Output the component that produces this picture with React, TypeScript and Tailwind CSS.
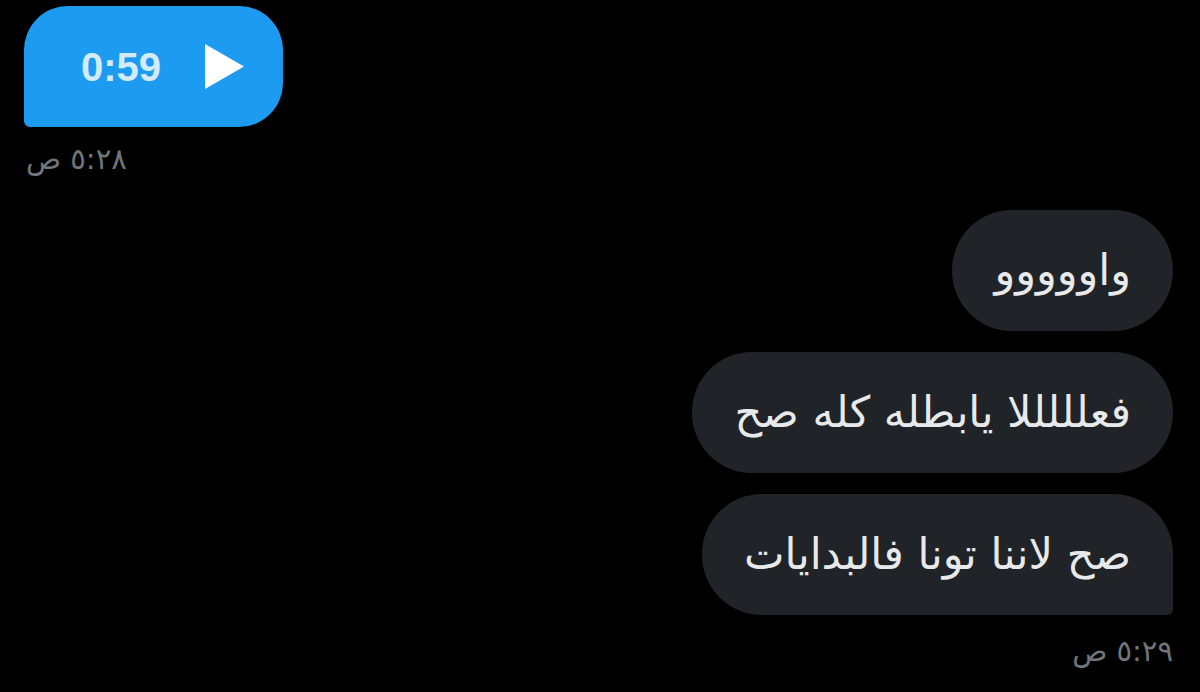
const arabic = { fontFamily: '"DejaVu Sans", "Noto Sans", sans-serif' };

const PlayIcon = () => (
  <svg width="40" height="46" viewBox="0 0 40 46">
    <path d="M0 0 L39 22.5 L0 45 Z" fill="#ffffff" />
  </svg>
);

const GrayBubble = ({ text, last }: { text: string; last?: boolean }) => (
  <div
    dir="rtl"
    className={
      'h-[121px] flex items-center px-[42px] bg-[#202327] text-[#e7e9ea] text-[43px] whitespace-nowrap ' +
      (last ? 'rounded-[60px] rounded-br-[6px]' : 'rounded-[60px]')
    }
    style={arabic}
  >
    {text}
  </div>
);

const App = () => {
  const messages = ['واووووو', 'فعلللللا يابطله كله صح', 'صح لاننا تونا فالبدايات'];

  return (
    <main className="w-[1200px] h-[692px] bg-black overflow-hidden">
      <div className="flex flex-col pt-[6px] pl-6 pr-[27px]">
        {/* voice message */}
        <div className="flex flex-col items-start">
          <div className="w-[259px] h-[121px] bg-[#1d9bf0] rounded-[44px] rounded-bl-[6px] flex items-center pl-[57px]">
            <span
              className="text-[40px] font-bold text-[#d4ebfc] leading-none"
              style={{ fontFamily: '"Liberation Sans", Arial, sans-serif' }}
            >
              0:59
            </span>
            <span className="ml-[44px] flex items-center">
              <PlayIcon />
            </span>
          </div>
          <div dir="rtl" className="mt-[14px] ml-[2px] text-[29px] text-[#71767b] leading-[36px]" style={arabic}>
            ٥:٢٨ ص
          </div>
        </div>

        {/* replies */}
        <div className="flex flex-col items-end gap-[21px] mt-[33px]">
          {messages.map((m, i) => (
            <GrayBubble key={i} text={m} last={i === messages.length - 1} />
          ))}
        </div>
        <div className="flex justify-end">
          <div dir="rtl" className="mt-[18px] text-[29px] text-[#71767b] leading-[36px]" style={arabic}>
            ٥:٢٩ ص
          </div>
        </div>
      </div>
    </main>
  );
};

export default App;
